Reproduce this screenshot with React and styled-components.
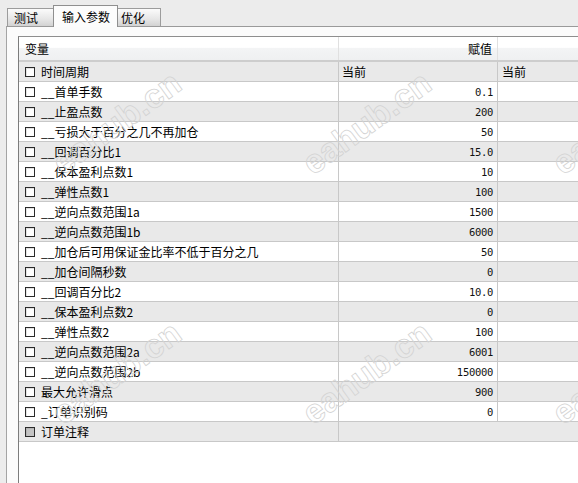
import React from 'react';
import styled, { createGlobalStyle } from 'styled-components';

const GlobalStyle = createGlobalStyle`
  html, body {
    margin: 0;
    padding: 0;
  }
  body {
    background: #ececec;
    font-family: 'Noto Sans CJK SC', 'Liberation Sans', sans-serif;
    font-size: 12px;
    color: #000;
  }
`;

const Window = styled.div`
  position: relative;
  width: 578px;
  height: 483px;
  overflow: hidden;
  display: flex;
  flex-direction: column;
  background: #ececec;
`;

const TabStrip = styled.div`
  display: flex;
  align-items: flex-end;
  height: 26px;
  padding-left: 7px;
  position: relative;
  z-index: 2;
`;

const Tab = styled.div`
  box-sizing: border-box;
  width: ${(p) => p.$w}px;
  height: ${(p) => (p.$active ? 22 : 18)}px;
  margin-bottom: ${(p) => (p.$active ? -1 : 0)}px;
  margin-left: ${(p) => (p.$active ? -1 : 0)}px;
  margin-right: ${(p) => (p.$active ? -1 : 0)}px;
  padding-left: ${(p) => p.$pad}px;
  display: flex;
  align-items: center;
  border: 1px solid ${(p) => (p.$active ? '#8f8f8f' : '#9c9c9c')};
  border-bottom: ${(p) => (p.$active ? 'none' : '0')};
  background: ${(p) =>
    p.$active ? '#fcfcfc' : 'linear-gradient(#fbfbfb, #e6e6e6 60%, #d2d2d2)'};
  position: relative;
  z-index: ${(p) => (p.$active ? 2 : 1)};
  font-size: 12px;
  line-height: 16px;
`;

const Panel = styled.div`
  flex: 1;
  display: flex;
  margin-left: 6px;
  border-top: 1px solid #9a9a9a;
  border-left: 1px solid #a4a4a4;
  background: #fbfbfb;
  padding: 9px 0 0 11px;
`;

const Grid = styled.div`
  flex: 1;
  min-width: 640px;
  background: #fff;
  border-top: 1px solid #8e8e8e;
  border-left: 1px solid #7c7c7c;
`;

const HeaderRow = styled.div`
  display: flex;
  height: 23px;
  border-bottom: 2px solid #cdcdcd;
  background: linear-gradient(#ffffff 0%, #ffffff 45%, #f3f4f5 50%, #eff0f1 100%);
`;

const HeaderCell = styled.div`
  box-sizing: border-box;
  width: ${(p) => (p.$w ? `${p.$w}px` : 'auto')};
  flex: ${(p) => (p.$w ? 'none' : 1)};
  display: flex;
  align-items: center;
  justify-content: ${(p) => (p.$right ? 'flex-end' : 'flex-start')};
  padding: 0 5px 0 6px;
  border-right: 1px solid #e0e0e0;
`;

const Row = styled.div`
  display: flex;
  height: 19px;
  border-bottom: 1px solid #c8c8c8;
  background: ${(p) => (p.$shade ? '#e9e9e9' : '#ffffff')};
`;

const NameCell = styled.div`
  box-sizing: border-box;
  width: 320px;
  display: flex;
  align-items: center;
  gap: 6px;
  padding-left: 6px;
  border-right: 1px solid #c8c8c8;
  white-space: nowrap;
  line-height: 19px;
`;

const ValueCell = styled.div`
  box-sizing: border-box;
  width: ${(p) => (p.$w ? `${p.$w}px` : 'auto')};
  flex: ${(p) => (p.$w ? 'none' : 1)};
  display: flex;
  align-items: center;
  justify-content: flex-end;
  padding-right: 4px;
  border-right: ${(p) => (p.$w ? '1px solid #c8c8c8' : 'none')};
  font-family: 'DejaVu Sans Mono', 'Liberation Mono', monospace;
  font-size: 10.5px;
  letter-spacing: -0.3px;
  color: #111;
`;

const CaptionCell = styled.div`
  box-sizing: border-box;
  width: ${(p) => (p.$w ? `${p.$w}px` : 'auto')};
  flex: ${(p) => (p.$w ? 'none' : 1)};
  display: flex;
  align-items: center;
  padding-left: ${(p) => p.$pad}px;
  border-right: ${(p) => (p.$w ? '1px solid #c8c8c8' : 'none')};
`;

const Check = styled.span`
  box-sizing: border-box;
  flex: none;
  width: 10px;
  height: 10px;
  border: 1px solid #2a2a2a;
  background: ${(p) => (p.$mixed ? '#c3c3c3' : '#ffffff')};
  box-shadow: inset 1px 1px 0 ${(p) => (p.$mixed ? '#b4b4b4' : '#e4e4e4')};
`;

/* faint outlined site stamp repeated over the sheet */
const Mark = styled.span`
  position: absolute;
  left: ${(p) => p.$x}px;
  top: ${(p) => p.$y}px;
  transform-origin: 0 100%;
  transform: rotate(-36deg);
  font-family: 'Liberation Sans', 'DejaVu Sans', sans-serif;
  font-weight: bold;
  font-size: 34px;
  line-height: 34px;
  color: transparent;
  -webkit-text-stroke: 0.8px #d3d3d3;
  white-space: nowrap;
  pointer-events: none;
  z-index: 5;
`;

const params = [
  ['__首单手数', '0.1'],
  ['__止盈点数', '200'],
  ['__亏损大于百分之几不再加仓', '50'],
  ['__回调百分比1', '15.0'],
  ['__保本盈利点数1', '10'],
  ['__弹性点数1', '100'],
  ['__逆向点数范围1a', '1500'],
  ['__逆向点数范围1b', '6000'],
  ['__加仓后可用保证金比率不低于百分之几', '50'],
  ['__加仓间隔秒数', '0'],
  ['__回调百分比2', '10.0'],
  ['__保本盈利点数2', '0'],
  ['__弹性点数2', '100'],
  ['__逆向点数范围2a', '6001'],
  ['__逆向点数范围2b', '150000'],
  ['最大允许滑点', '900'],
  ['_订单识别码', '0'],
];

const marks = [
  [66, 146],
  [316, 146],
  [566, 146],
  [66, 396],
  [316, 396],
  [566, 396],
];

export default function App() {
  return (
    <>
      <GlobalStyle />
      <Window>
        <TabStrip>
          <Tab $w={47} $pad={6}>测试</Tab>
          <Tab $w={65} $pad={8} $active>输入参数</Tab>
          <Tab $w={44} $pad={3}>优化</Tab>
        </TabStrip>
        <Panel>
          <Grid>
            <HeaderRow>
              <HeaderCell $w={320}>变量</HeaderCell>
              <HeaderCell $w={159} $right>赋值</HeaderCell>
              <HeaderCell />
            </HeaderRow>

            <Row $shade>
              <NameCell>
                <Check />
                时间周期
              </NameCell>
              <CaptionCell $w={159} $pad={3}>当前</CaptionCell>
              <CaptionCell $pad={4}>当前</CaptionCell>
            </Row>

            {params.map(([name, value], i) => (
              <Row key={name} $shade={i % 2 === 1}>
                <NameCell>
                  <Check />
                  {name}
                </NameCell>
                <ValueCell $w={159}>{value}</ValueCell>
                <ValueCell />
              </Row>
            ))}

            <Row $shade>
              <NameCell>
                <Check $mixed />
                订单注释
              </NameCell>
              <ValueCell />
            </Row>
          </Grid>
        </Panel>

        {marks.map(([x, y]) => (
          <Mark key={`${x}-${y}`} $x={x} $y={y}>
            eahub.cn
          </Mark>
        ))}
      </Window>
    </>
  );
}
